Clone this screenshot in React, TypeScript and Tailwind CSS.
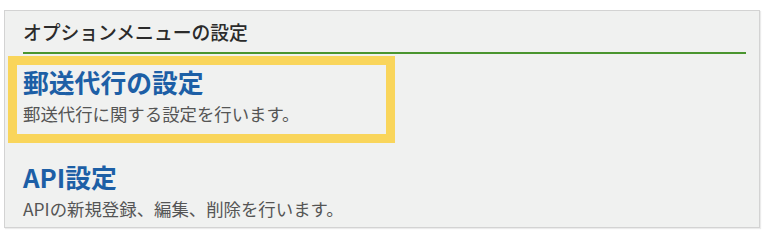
const items = [
  { title: "郵送代行の設定", desc: "郵送代行に関する設定を行います。", active: true },
  { title: "API設定", desc: "APIの新規登録、編集、削除を行います。", active: false },
];

export default function App() {
  return (
    <div
      className="min-h-screen bg-white pl-[4px] pt-[10px]"
      style={{ fontFamily: '"Noto Sans CJK JP", "Noto Sans", sans-serif' }}
    >
      <div className="w-[756px] h-[218px] overflow-hidden border border-[#d3d3d3] bg-[#f0f1f0] pl-[18px] pr-[13px] pt-[9px] shadow-[1px_1px_1px_rgba(0,0,0,0.08)]">
        <div className="border-b-2 border-[#4a952f] pb-[8px]">
          <h2 className="text-[18.8px] leading-[24px] font-medium text-[#2b2b2b]">オプションメニューの設定</h2>
        </div>
        <div className="mt-[2px] flex flex-col gap-[8px]">
          {items.map((item) => (
            <a
              key={item.title}
              href="#"
              className={
                "-ml-[15px] block w-[387px] border-[9px] px-[6px] pt-[2px] pb-[8px] " +
                (item.active ? "border-[#f9d55b]" : "border-transparent")
              }
            >
              <div className="text-[25.8px] leading-[30px] font-bold text-[#1d5fa6]">{item.title}</div>
              <div className="mt-[5px] text-[17.4px] leading-[24px] text-[#555]">{item.desc}</div>
            </a>
          ))}
        </div>
      </div>
    </div>
  );
}
